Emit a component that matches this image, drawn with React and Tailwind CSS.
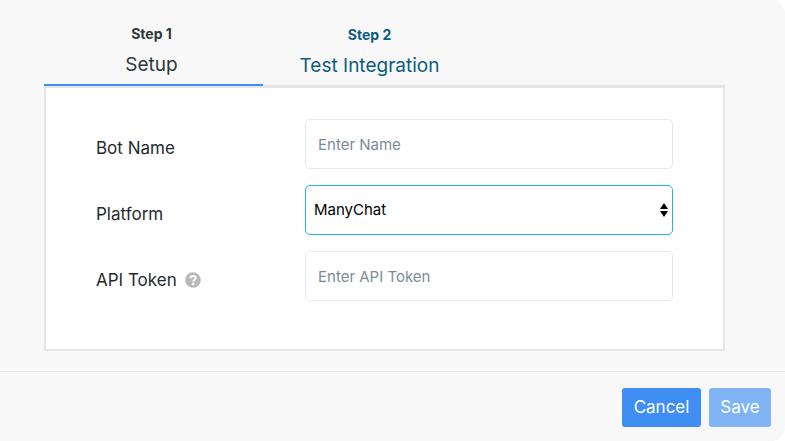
import React from "react";

function Tab({ step, title, active, className }) {
  return (
    <button
      type="button"
      role="tab"
      aria-selected={active}
      className={`flex flex-col items-center border-b-2 pb-1 ${
        active ? "border-[#3f8ef3] text-[#2d373c]" : "border-transparent pt-px text-[#0d5c7f]"
      } ${className}`}
    >
      <span className="text-[14px] leading-5 font-bold">{step}</span>
      <span className="mt-[7px] text-[19px] leading-7">{title}</span>
    </button>
  );
}

function HelpIcon() {
  return (
    <svg viewBox="0 0 16 16" className="size-4" aria-hidden="true">
      <circle cx="8" cy="8" r="7.8" fill="#b9b9b9" />
      <path
        d="M5.3 6.2C5.6 4.7 6.6 4 8 4c1.5 0 2.6.8 2.6 2.1 0 1.7-2.3 1.7-2.3 3.4"
        fill="none"
        stroke="#fff"
        strokeWidth="2.1"
      />
      <circle cx="8.2" cy="11.9" r="1.3" fill="#fff" />
    </svg>
  );
}

function Field({ id, label, help, children }) {
  return (
    <div className="grid grid-cols-[209px_1fr] items-start">
      <div className="flex items-center gap-2 pt-[17px]">
        <label htmlFor={id} className="text-[17px] leading-6 text-[#242b2f]">
          {label}
        </label>
        {help && (
          <button type="button" aria-label="API token help">
            <HelpIcon />
          </button>
        )}
      </div>
      {children}
    </div>
  );
}

const inputStyle =
  "h-[50px] w-full min-w-0 rounded-[5px] border border-[#e5e8e9] bg-white px-3 text-[15px] text-[#242b2f] placeholder:text-[#7b8b9c] outline-none";

export default function App() {
  return (
    <div className="bg-white">
      <form className="rounded-r-[14px] bg-[#f8f8f8] font-['Inter','Liberation_Sans',sans-serif]">
        <div className="pt-6 pr-[60px] pb-5 pl-11">
          <div role="tablist" className="flex shadow-[inset_0_-1px_0_#e4e6e7]">
            <Tab step="Step 1" title="Setup" active className="w-[219px] pr-1" />
            <Tab step="Step 2" title="Test Integration" active={false} className="w-[213px]" />
          </div>
          <div className="flex flex-col gap-4 border-2 border-[#e4e6e7] bg-white px-[50px] pt-[31px] pb-12">
            <Field id="bot-name" label="Bot Name">
              <input id="bot-name" type="text" placeholder="Enter Name" className={inputStyle} />
            </Field>
            <Field id="platform" label="Platform">
              <div className="relative">
                <select
                  id="platform"
                  className="h-[50px] w-full appearance-none rounded-[5px] border border-[#22b8cf] bg-white px-2 text-[15px] text-black outline-none"
                >
                  <option>ManyChat</option>
                </select>
                <svg
                  viewBox="0 0 8 14"
                  className="pointer-events-none absolute top-[18px] right-[5px] h-3.5 w-2"
                  aria-hidden="true"
                >
                  <path d="M4 0l4 6H0zM4 14l4-6H0z" fill="#000" />
                </svg>
              </div>
            </Field>
            <Field id="api-token" label="API Token" help>
              <input id="api-token" type="text" placeholder="Enter API Token" className={inputStyle} />
            </Field>
          </div>
        </div>
        <div className="flex justify-end gap-2 border-t border-[#e1e7e8] pt-4 pr-3.5 pb-3.5">
          <button type="button" className="h-[39px] w-[79px] rounded-[3px] bg-[#3f8ef3] text-[17px] text-white">
            Cancel
          </button>
          <button type="button" className="h-[39px] w-[62px] rounded-[3px] bg-[#81b4f4] text-[17px] text-white">
            Save
          </button>
        </div>
      </form>
    </div>
  );
}
